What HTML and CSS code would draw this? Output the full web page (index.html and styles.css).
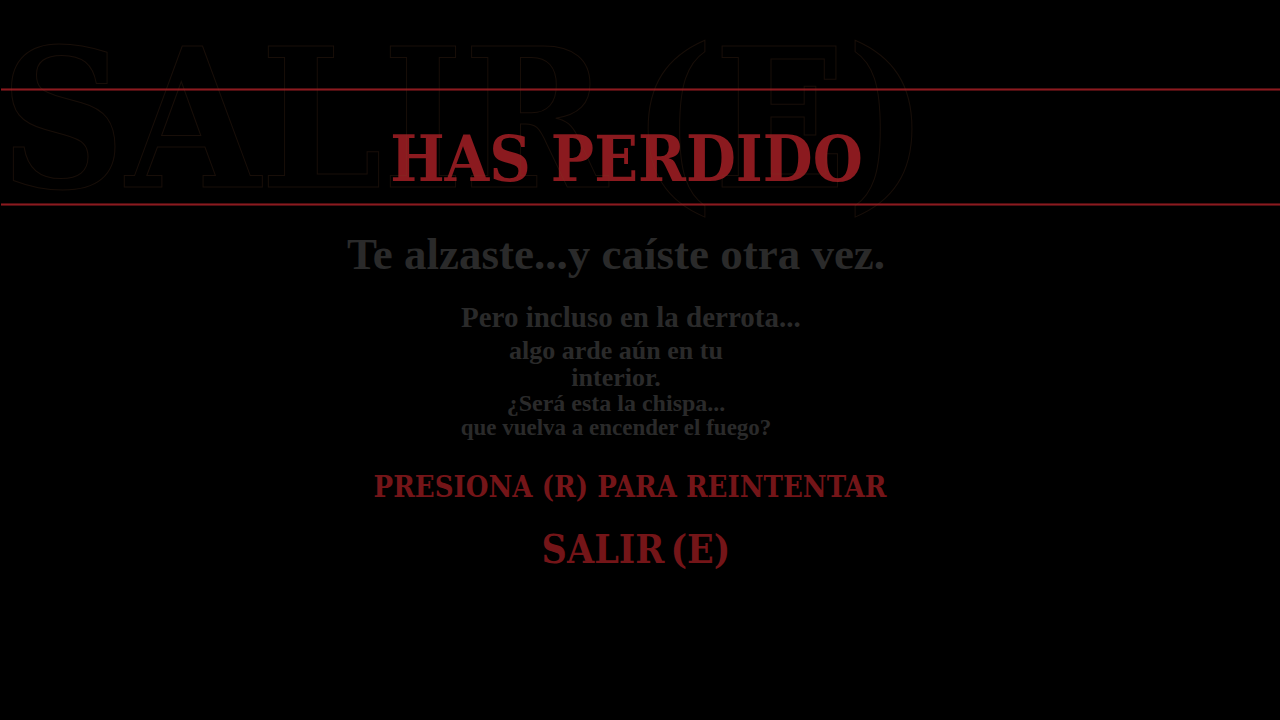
FILE: index.html
```html
<!DOCTYPE html>
<html lang="es">
<head>
<meta charset="utf-8">
<title>Has perdido</title>
<link rel="stylesheet" href="styles.css">
</head>
<body>
<main class="screen">
  <header class="banner"><h1 class="title">HAS PERDIDO</h1></header>
  <div class="ghost" aria-hidden="true"><span>SALIR</span> <span>(E)</span></div>
  <section class="story">
    <h2 class="lead">Te alzaste...y caíste otra vez.</h2>
    <div class="verses">
      <p class="verse verse-first">Pero incluso en la derrota...</p>
      <p class="verse verse-mid">algo arde aún en tu<br>interior.</p>
      <p class="verse verse-ask">¿Será esta la chispa...</p>
      <p class="verse verse-last">que vuelva a encender el fuego?</p>
    </div>
  </section>
  <nav class="actions">
    <button class="action retry" type="button">PRESIONA (R) PARA REINTENTAR</button>
    <button class="action quit" type="button"><span>SALIR</span> <span>(E)</span></button>
  </nav>
</main>
</body>
</html>
```
FILE: styles.css
```css
* { box-sizing: border-box; }

body {
  margin: 0;
  background: #000;
  color: #2a2a2a;
  font-family: "Liberation Serif", serif;
  font-weight: bold;
}

h1, h2, p { margin: 0; }

.screen {
  position: relative;
  min-height: 100vh;
  padding-top: 88px;
  overflow: hidden;
}

.banner {
  margin-left: 1px;
  padding: 27px 28px 3px 0;
  background:
    linear-gradient(#4d0e11 1px, #8b1a1f 1px 2px, #4d0e11 2px) top / 100% 3px no-repeat,
    linear-gradient(#4d0e11 1px, #8b1a1f 1px 2px, #4d0e11 2px) bottom / 100% 3px no-repeat;
}

.title {
  color: #8b1a1f;
  font-family: "DejaVu Serif Condensed", "DejaVu Serif", serif;
  font-size: 64px;
  line-height: 88px;
  text-align: center;
  white-space: nowrap;
}

.ghost {
  position: absolute;
  top: 10px;
  left: 0;
  display: flex;
  gap: 24px;
  color: transparent;
  font-family: "DejaVu Serif Condensed", "DejaVu Serif", serif;
  font-size: 193px;
  line-height: 220px;
  white-space: nowrap;
  pointer-events: none;
  -webkit-text-stroke: 1px rgba(120, 72, 40, 0.2);
}

.story {
  display: flex;
  flex-direction: column;
  align-items: center;
  gap: 15px;
  padding: 20px 48px 0 0;
}

.lead {
  font-size: 45px;
  line-height: 56px;
  white-space: nowrap;
}

.verses {
  display: flex;
  flex-direction: column;
  align-items: center;
  width: 310px;
}

.verse { text-align: center; white-space: nowrap; }
.verse-first { align-self: flex-start; font-size: 29px; line-height: 40px; }
.verse-mid { font-size: 26px; line-height: 27px; }
.verse-ask { font-size: 24px; line-height: 24px; }
.verse-last { font-size: 23px; line-height: 25px; }

.actions {
  display: flex;
  flex-direction: column;
  align-items: center;
  gap: 16px;
  padding: 27px 20px 0 0;
}

.action {
  padding: 0;
  border: 0;
  background: none;
  color: #741518;
  font-family: "DejaVu Serif Condensed", "DejaVu Serif", serif;
  font-weight: bold;
  white-space: nowrap;
  cursor: pointer;
}

.retry { font-size: 29px; line-height: 40px; }

.quit {
  display: flex;
  gap: 6px;
  padding-left: 12px;
  font-size: 39px;
  line-height: 52px;
}
```
